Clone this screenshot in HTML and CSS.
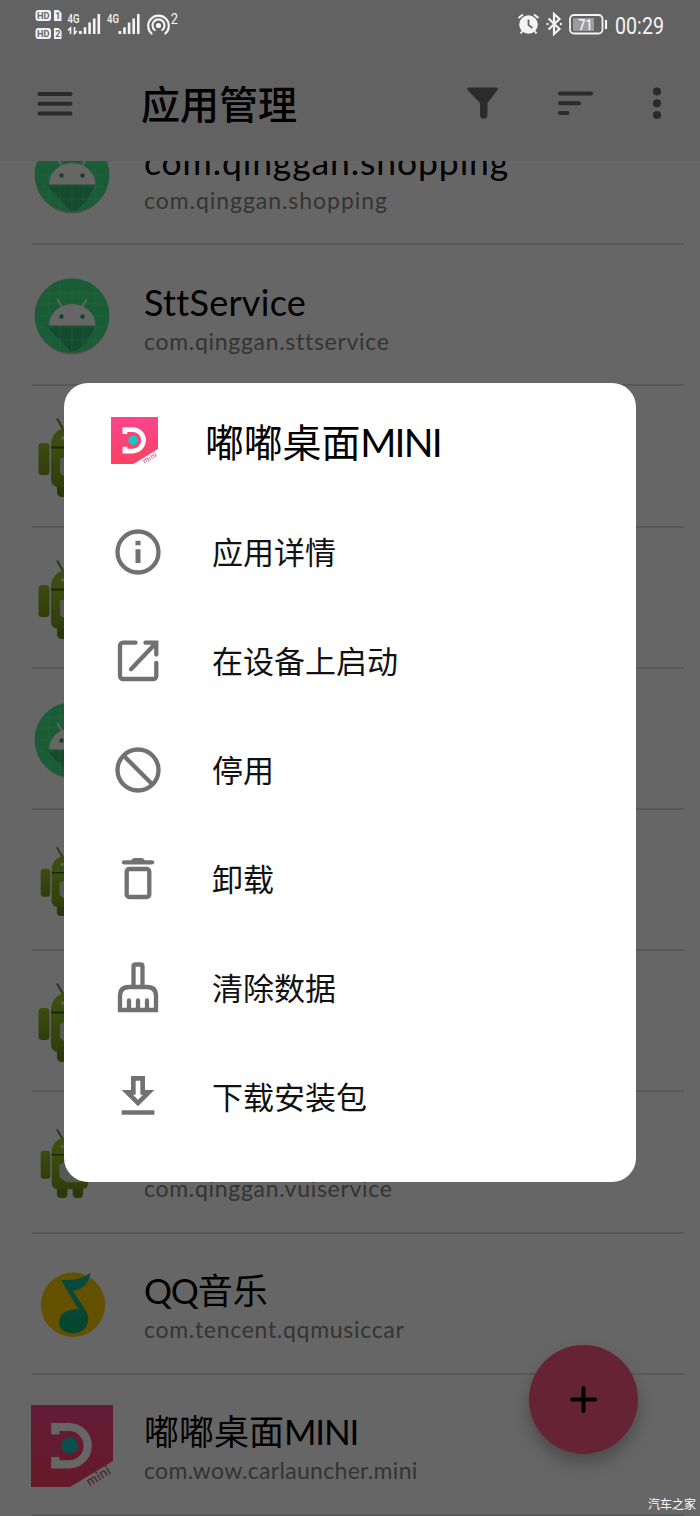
FILE: index.html
```html
<!DOCTYPE html>
<html lang="zh-CN">
<head>
<meta charset="utf-8">
<title>应用管理</title>
<link rel="stylesheet" href="styles.css">
</head>
<body>
<svg class="defs" width="0" height="0">
  <symbol id="robot-round" viewBox="0 0 80 80">
    <circle cx="40" cy="41.200" r="37" fill="#000" opacity=".25"/>
    <circle cx="40" cy="39.600" r="37.400" fill="#40e688"/>
    <path d="M14 49.500L39 76Q53 74 63 49.500z" fill="#34b870"/>
    <path d="M17 12v56M28 6v69M40 3v74M51 5v70M63 12v56M12 17h56M6 28h68M3 40h74M4 51h71M12 64h56" stroke="#7dfab4" stroke-width=".8" opacity=".5"/>
    <path d="M17 49.500a23.200 21.500 0 0 1 46.400 0z" fill="#fff"/>
    <path d="M25 23l5 8M55 23l-5 8" stroke="#fff" stroke-width="1.600"/>
    <circle cx="29.500" cy="40.500" r="2.200" fill="#3a9f78"/><circle cx="50.500" cy="40.500" r="2.200" fill="#3a9f78"/>
  </symbol>
  <linearGradient id="leaf" x2="0" y2="1"><stop stop-color="#98bd25"/><stop offset="1" stop-color="#779a1e"/></linearGradient>
  <symbol id="robot-full" viewBox="0 0 80 80">
    <path d="M25 1.500l7 12M55 1.500l-7 12" stroke="#6f8a2a" stroke-width="2"/>
    <path d="M19 28c0-11 8-18 21-18s21 7 21 18v2H19z" fill="#9abf2b"/>
    <rect x="6.500" y="26" width="11" height="32" rx="3.500" fill="url(#leaf)"/>
    <rect x="62.500" y="26" width="11" height="32" rx="3.500" fill="url(#leaf)"/>
    <rect x="25" y="61" width="12" height="19" rx="4.500" fill="#6c8d1c"/>
    <rect x="43" y="61" width="12" height="19" rx="4.500" fill="#6c8d1c"/>
    <path d="M19 31h42v31q0 8-8 8H27q-8 0-8-8z" fill="url(#leaf)"/>
    <path d="M19 30.500h42" stroke="#3f5b10" stroke-width="1.800"/>
    <path d="M28 42l9-4h15v24H36l-8-6z" fill="#d8dccd"/>
    <circle cx="31" cy="21" r="1.800" fill="#e6f0c8"/><circle cx="49" cy="21" r="1.800" fill="#e6f0c8"/>
  </symbol>
  <linearGradient id="note" x2="0" y2="1"><stop stop-color="#17bba8"/><stop offset="1" stop-color="#10ad70"/></linearGradient>
  <symbol id="music" viewBox="0 0 80 80">
    <circle cx="41" cy="39.800" r="32.200" fill="#f7cb00"/>
    <path d="M29 15Q49 16 58.500 7.500Q57 17 52 21Q48 25 41 26L54 46Q58 53 55 60Q51 68.500 40 68.500Q27 67 27 57Q28 45 45 44L47 45Z" fill="url(#note)"/>
  </symbol>
  <linearGradient id="pink" x2="0" y2="1"><stop stop-color="#fb458d"/><stop offset="1" stop-color="#fc4261"/></linearGradient>
  <symbol id="dudu" viewBox="0 0 82 82">
    <path d="M0 0H82V56L39 82H0z" fill="url(#pink)"/>
    <path d="M24.300 29.500V22H38A18.700 18.700 0 0 1 38 59.400H24.300V52" fill="none" stroke="#fff" stroke-width="8.200"/>
    <circle cx="38.700" cy="40.500" r="8.300" fill="#16c8c3"/>
    <text x="58.500" y="81.500" transform="rotate(-31 58.500 81.500)" class="logo-text" textLength="26">mini</text>
  </symbol>
</svg>

<div class="screen">
  <header class="toolbar">
    <svg class="menu" width="36" height="26" viewBox="0 0 36 26"><path d="M2.500 3h31M2.500 12.800h31M2.500 22.500h31"/></svg>
    <h1>应用管理</h1>
    <svg class="tools" width="200" height="36" viewBox="0 0 200 36">
      <path class="solid" d="M3 1.500H30Q33 1.500 31.500 4L21.500 17V29A3.700 3.700 0 0 1 14 29V17L1.500 4Q.5 1.500 3 1.500z"/>
      <path d="M94 7.500h31M94 17.300h19M94 27h7.500"/>
      <circle class="solid" cx="191" cy="5.500" r="4.100"/><circle class="solid" cx="191" cy="17.300" r="4.100"/><circle class="solid" cx="191" cy="29" r="4.100"/>
    </svg>
  </header>
  <main class="viewport">
    <ul class="apps">
      <li><svg><use href="#robot-round"/></svg><div><b class="wide">com.qinggan.shopping</b><span class="s-wide">com.qinggan.shopping</span></div></li>
      <li><svg><use href="#robot-round"/></svg><div><b>SttService</b><span>com.qinggan.sttservice</span></div></li>
      <li><svg><use href="#robot-full"/></svg></li>
      <li><svg><use href="#robot-full"/></svg></li>
      <li><svg><use href="#robot-round"/></svg></li>
      <li><svg class="small"><use href="#robot-full"/></svg></li>
      <li><svg><use href="#robot-full"/></svg></li>
      <li><svg class="small"><use href="#robot-full"/></svg><div><b>&nbsp;</b><span>com.qinggan.vuiservice</span></div></li>
      <li><svg><use href="#music"/></svg><div><b class="cjk"><i>QQ</i>音乐</b><span>com.tencent.qqmusiccar</span></div></li>
      <li><svg class="large"><use href="#dudu"/></svg><div><b class="cjk">嘟嘟桌面<i>MINI</i></b><span class="s-tight">com.wow.carlauncher.mini</span></div></li>
    </ul>
  </main>
  <button class="fab"><svg width="28" height="28" viewBox="0 0 28 28"><path d="M13.500 2v23M2 13.500h23"/></svg></button>
</div>
<div class="scrim"></div>

<div class="status">
  <svg width="150" height="44" viewBox="34 0 150 44">
    <g fill="#f4f4f4">
      <rect x="35.500" y="10" width="15.500" height="11" rx="3"/><path d="M54 10h4.500l3 3v8h-7.500z"/>
      <rect x="35.500" y="28" width="15.500" height="11" rx="3"/><path d="M54 28h4.500l3 3v8h-7.500z"/>
      <path d="M79 31h2.800v3H79zM83.700 27.300h2.600V34h-2.600zM88.300 22.500h2.600V34h-2.600zM92.900 18.500h2.600V34h-2.600zM97.500 14h2.600v20h-2.600z"/>
      <path d="M118.500 31h2.800v3h-2.800zM123.200 27.300h2.600V34h-2.600zM127.800 22.500h2.600V34h-2.600zM132.400 18.500h2.600V34h-2.600zM137 14h2.600v20H137z"/>
      <circle cx="158.500" cy="25.500" r="2.600"/>
    </g>
    <path d="M68 30.500l2.500-2.500v6M74.500 27v6.500l2.500-2.500" fill="none" stroke="#f4f4f4" stroke-width="1.600"/>
    <path d="M151.600 33.500A10.300 10.300 0 1 1 165.400 33.500M154.700 30A6 6 0 1 1 162.300 30" fill="none" stroke="#f4f4f4" stroke-width="2.200" stroke-linecap="round"/>
    <g class="badge-text"><text x="37" y="18.800" textLength="12.500" lengthAdjust="spacingAndGlyphs">HD</text><text x="55.200" y="18.800">1</text><text x="37" y="36.800" textLength="12.500" lengthAdjust="spacingAndGlyphs">HD</text><text x="55.200" y="36.800">2</text></g>
    <g class="net-text"><text x="67.500" y="23.300" textLength="12" lengthAdjust="spacingAndGlyphs">4G</text><text x="107" y="23.300" textLength="12" lengthAdjust="spacingAndGlyphs">4G</text></g>
    <text x="170.800" y="24" class="two" textLength="7.200" lengthAdjust="spacingAndGlyphs">2</text>
  </svg>
  <svg width="150" height="44" viewBox="516 0 150 44">
    <circle cx="528.500" cy="24.500" r="9.300" fill="#f4f4f4"/>
    <path d="M518.500 18l4.500-3.500M538.500 18l-4.500-3.500M522.500 31l-2 2.500M534.500 31l2 2.500" stroke="#f4f4f4" stroke-width="2"/>
    <path d="M528.500 19.500V25l4 3" stroke="#666" stroke-width="1.800" fill="none"/>
    <path d="M548.500 18.500l11 10.500-5.500 5V14l5.500 5-11 10.500M546.500 24h2M560 24h2" stroke="#f4f4f4" stroke-width="2.200" fill="none"/>
    <rect x="573" y="18" width="21" height="13" rx="1" fill="#9b9b9b"/>
    <rect x="570" y="15" width="32.500" height="18.500" rx="4" fill="none" stroke="#f4f4f4" stroke-width="1.800"/>
    <path d="M606 20v9" stroke="#f4f4f4" stroke-width="2.200"/>
    <text x="578.500" y="30" class="pct" textLength="14" lengthAdjust="spacingAndGlyphs">71</text>
    <text x="615" y="33.500" class="clock" textLength="49" lengthAdjust="spacingAndGlyphs">00:29</text>
  </svg>
</div>

<section class="dialog">
  <h2><svg width="47" height="47"><use href="#dudu"/></svg><span>嘟嘟桌面<i>MINI</i></span></h2>
  <ul>
    <li><svg viewBox="0 0 56 56"><circle cx="28" cy="28" r="20.500"/><path d="M28 16.800v4.400M28 25.300V39" stroke-width="5"/></svg><span>应用详情</span></li>
    <li><svg viewBox="0 0 56 56"><path d="M25.500 9.700H13a3 3 0 0 0-3 3V43a3 3 0 0 0 3 3h30.300a3 3 0 0 0 3-3V30" stroke-linecap="round"/><path d="M35.500 9.700H46.300V21.500M21 36.300L45.500 10.500" class="sharp" stroke-linecap="round"/></svg><span>在设备上启动</span></li>
    <li><svg viewBox="0 0 56 56"><circle cx="28" cy="28" r="20.500"/><path d="M13.500 13.500l29 29"/></svg><span>停用</span></li>
    <li><svg viewBox="0 0 56 56"><path d="M14 11.300h28" stroke-linecap="round"/><path d="M20 11Q22 7 25 7h6q3 0 5 4z" class="fill"/><rect x="16.700" y="18" width="22.600" height="28" rx="2.500"/></svg><span>卸载</span></li>
    <li><svg viewBox="0 0 56 56"><path class="sharp" d="M23.500 27V6.500q0-2 2-2h5q2 0 2 2V27M10 50V36q0-9 9-9h18q9 0 9 9v14z"/><path d="M19 50V40.500M28 50V40.500M37 50V40.500" stroke-linecap="round"/></svg><span>清除数据</span></li>
    <li><svg viewBox="0 0 24 24"><path class="fill" d="M19 9h-4V3H9v6H5l7 7 7-7zm-8 2V5h2v6h1.170L12 13.170 9.830 11H11zM5 17.700h14v1.900H5z"/></svg><span>下载安装包</span></li>
  </ul>
</section>
<div class="watermark">汽车之家</div>
</body>
</html>
```
FILE: styles.css
```css
* { box-sizing: border-box; }
body { margin: 0; width: 700px; height: 1516px; overflow: hidden; position: relative; font-family: Lato, "Noto Sans CJK SC", sans-serif; font-variant-ligatures: none; color: #000; }
ul { list-style: none; margin: 0; padding: 0; }
h1, h2 { margin: 0; font-weight: 400; }
i { font-style: normal; }
svg { display: block; flex: none; }
.defs { position: absolute; }
.screen { height: 1516px; background: #fff; display: flex; flex-direction: column; }
.toolbar { height: 161px; flex: none; background: #f5f5f5; display: flex; align-items: center; padding: 47px 0 0 36.500px; }
.toolbar svg { fill: none; stroke: #6c6c6c; stroke-width: 4; stroke-linecap: round; }
.toolbar .solid { fill: #6c6c6c; stroke: none; }
.toolbar h1 { font-size: 39px; line-height: 56px; font-weight: 500; margin-left: 68.500px; width: 325px; }
.viewport { flex: 1; overflow: hidden; }
.apps { margin-top: -57px; }
.apps li { height: 141.200px; display: flex; align-items: center; border-bottom: 2px solid #dedede; margin: 0 16px 0 32px; }
.apps li > svg { width: 80px; height: 80px; margin-top: 3px; }
.apps li > svg.small { width: 70px; height: 70px; margin: 3px 7px 0 3px; }
.apps li > svg.large { width: 82px; height: 82px; margin: 3px -1px 0; }
.apps li > div { margin: 9px 0 0 32px; display: flex; flex-direction: column; }
.apps b { font-weight: 400; font-size: 36px; line-height: 43px; letter-spacing: .3px; white-space: nowrap; }
.apps b.wide { font-size: 35.500px; letter-spacing: .9px; }
.apps b.cjk { font-size: 35px; letter-spacing: 0; }
.apps b.cjk i { letter-spacing: -1.200px; }
.apps span { font-size: 23px; line-height: 34px; letter-spacing: .7px; color: #828282; white-space: nowrap; }
.apps span.s-wide { letter-spacing: .95px; }
.apps span.s-tight { letter-spacing: .3px; }
.fab { position: absolute; left: 529px; top: 1345px; width: 109px; height: 109px; border: 0; border-radius: 50%; background: #ff5a80; display: grid; place-items: center; box-shadow: 0 9px 18px rgba(0,0,0,.28); }
.fab path { stroke: #000; stroke-width: 4; stroke-linecap: round; }
.scrim { position: absolute; inset: 0; background: rgba(0,0,0,.6); }
.status { position: absolute; top: 0; left: 0; right: 0; display: flex; justify-content: space-between; padding: 0 34px; fill: #f4f4f4; }
.status svg { overflow: visible; }
.badge-text { font: 700 9px Roboto, sans-serif; fill: #666; }
.net-text { font: 500 12.500px Roboto, sans-serif; }
.two { font: 14px Roboto, sans-serif; }
.pct { font: 500 15px Roboto, sans-serif; }
.clock { font: 23.500px Roboto, sans-serif; }
.logo-text { font: 13px Lato, sans-serif; fill: #c83a60; }
.dialog { position: absolute; left: 64px; top: 383px; width: 572px; height: 799px; border-radius: 24px; background: #fff; padding-top: 22px; }
.dialog h2 { display: flex; align-items: center; height: 70px; padding-left: 47px; gap: 47px; font-size: 39px; }
.dialog h2 span { letter-spacing: -.2px; }
.dialog h2 i { letter-spacing: -1.800px; }
.dialog ul { padding-top: 22px; }
.dialog li { height: 109px; display: flex; align-items: center; padding-left: 46px; gap: 46px; font-size: 31px; color: #111; }
.dialog li span { margin-top: -2px; }
.dialog li svg { width: 56px; height: 56px; fill: none; stroke: #717171; stroke-width: 4.300; stroke-linejoin: round; }
.dialog li .sharp { stroke-linejoin: miter; }
.dialog li .fill { fill: #717171; stroke: none; }
.watermark { position: absolute; right: 4px; bottom: 2px; color: #fff; font-size: 12px; line-height: 18px; }
```
